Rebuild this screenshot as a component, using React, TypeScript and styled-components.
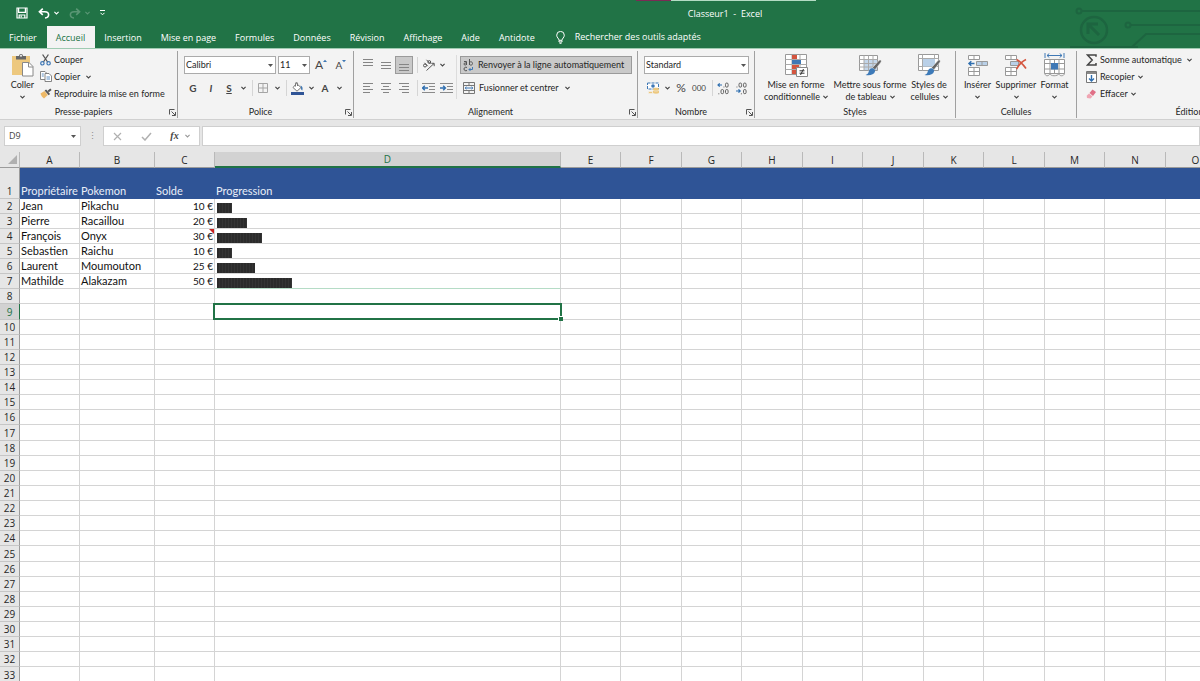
import React from "react";
import styled, { createGlobalStyle, css } from "styled-components";

const GlobalStyle = createGlobalStyle`
  *, *::before, *::after { box-sizing: border-box; }
  body {
    margin: 0;
    background: #fff;
    color: #262626;
    font: 9px/12px "Open Sans", "Noto Sans", sans-serif;
  }
  button, input, select {
    margin: 0;
    padding: 0;
    border: 0;
    border-radius: 0;
    background: none;
    color: inherit;
    font: inherit;
  }
  svg { display: block; flex: none; }
`;

const Window = styled.div`
  display: flex;
  flex-direction: column;
  height: 100vh;
  overflow: hidden;
`;

/* ---------- Title bar and tabs ---------- */

const Header = styled.header`
  position: relative;
  flex: none;
  overflow: hidden;
  background: #217346;
  color: #fff;
`;

const Circuit = styled.svg`
  position: absolute;
  top: 0;
  right: 0;
`;

const TopEdge = styled.div`
  position: absolute;
  top: 0;
  left: 53%;
  width: 180px;
  height: 1px;
  background: linear-gradient(to right, #7a2b55 35px, #b4dcc4 35px);
`;

const TitleBar = styled.div`
  position: relative;
  display: grid;
  grid-template-columns: 1fr auto 1fr;
  align-items: center;
  height: 26px;
`;

const QuickAccess = styled.div`
  display: flex;
  align-items: center;
  padding-left: 16px;
`;

const QuickButton = styled.button<{ $dim?: boolean }>`
  display: flex;
  align-items: center;
  gap: 4px;
  margin-right: 10px;
  opacity: ${(p) => (p.$dim ? 0.25 : 1)};
`;

const DocTitle = styled.h1`
  margin: 0;
  padding: 2px 0 0 250px;
  font-size: 9px;
  line-height: 12px;
  font-weight: 400;
  white-space: pre;
`;

const Tabs = styled.nav`
  position: relative;
  display: flex;
  height: 22px;
`;

const Tab = styled.button<{ $active?: boolean }>`
  padding: 2px 10px 0 9px;
  white-space: nowrap;
  ${(p) =>
    p.$active &&
    css`
      background: #f3f3f3;
      color: #217346;
    `}
`;

const TellMe = styled.button`
  display: flex;
  align-items: center;
  gap: 10px;
  margin-left: 11px;
  white-space: nowrap;
`;

/* ---------- Ribbon ---------- */

const Ribbon = styled.div`
  display: flex;
  flex: none;
  height: 72px;
  padding: 2px 0 1px;
  overflow: hidden;
  border-top: 1px solid #9fcbb2;
  border-bottom: 1px solid #d0d0d0;
  background: #f3f3f3;
  font-family: Lato, "Open Sans", sans-serif;
`;

const Group = styled.section<{ $w: number }>`
  display: flex;
  flex: none;
  flex-direction: column;
  width: ${(p) => p.$w}px;
  border-right: 1px solid #a0a0a0;
`;

const GroupBody = styled.div<{ $pad?: number }>`
  display: flex;
  flex: 1;
  padding-left: ${(p) => p.$pad ?? 5}px;
`;

const GroupFooter = styled.div`
  display: flex;
  align-items: center;
  height: 12px;
`;

const GroupTitle = styled.h2`
  flex: 1;
  margin: 0;
  font-size: 9px;
  line-height: 12px;
  font-weight: 400;
  text-align: center;
`;

const PlainButton = styled.button`
  display: flex;
  align-items: center;
  justify-content: center;
`;

const Launcher = styled(PlainButton)`
  width: 10px;
`;

const List = styled.div`
  display: flex;
  flex-direction: column;
`;

const ListButton = styled.button`
  display: flex;
  align-items: center;
  height: 17px;
  gap: 3px;
  white-space: nowrap;
`;

const ListIcon = styled.span`
  display: flex;
  justify-content: center;
  width: 11px;
`;

const Rows = styled.div`
  display: flex;
  flex-direction: column;
  gap: 5px;
  padding-top: 5px;
`;

const Row = styled.div<{ $gap?: number }>`
  display: flex;
  align-items: center;
  height: 18px;
  gap: ${(p) => p.$gap ?? 0}px;
`;

const ToolButton = styled.button<{ $on?: boolean; $bold?: boolean; $italic?: boolean; $under?: boolean; $size?: number }>`
  display: flex;
  align-items: center;
  justify-content: center;
  width: 18px;
  height: 18px;
  color: #444;
  font-size: ${(p) => p.$size ?? 10}px;
  font-weight: ${(p) => (p.$bold ? 700 : 400)};
  font-style: ${(p) => (p.$italic ? "italic" : "normal")};
  text-decoration: ${(p) => (p.$under ? "underline" : "none")};
  ${(p) =>
    p.$on &&
    css`
      border: 1px solid #9a9a9a;
      background: #c9c9c9;
    `}
`;

const ArrowButton = styled.button`
  display: flex;
  align-items: center;
  justify-content: center;
  width: 10px;
  height: 18px;
`;

const Rule = styled.span`
  width: 1px;
  height: 16px;
  margin: 0 1px 0 4px;
  background: #d5d5d5;
`;

const TallRule = styled.span`
  width: 1px;
  height: 44px;
  margin: 4px 3px 0 1px;
  background: #dcdcdc;
`;

const SelectBox = styled.label<{ $w: number }>`
  display: grid;
  align-items: center;
  width: ${(p) => p.$w}px;
  height: 18px;
  border: 1px solid #ababab;
  background: #fff;
  & > * { grid-area: 1 / 1; }
  & > select { width: 100%; height: 16px; padding-left: 1px; appearance: none; }
  & > svg { justify-self: end; margin-right: 2px; pointer-events: none; }
`;

const WideButton = styled.button<{ $on?: boolean }>`
  display: flex;
  align-items: center;
  gap: 4px;
  width: 172px;
  height: 18px;
  padding-left: 2px;
  border: 1px solid ${(p) => (p.$on ? "#9a9a9a" : "transparent")};
  background: ${(p) => (p.$on ? "#c9c9c9" : "transparent")};
  white-space: nowrap;
`;

const BigButton = styled.button<{ $w: number }>`
  display: flex;
  flex: none;
  flex-direction: column;
  align-items: center;
  width: ${(p) => p.$w}px;
  height: 54px;
  padding-top: 2px;
  white-space: nowrap;
  & > svg { margin-bottom: 2px; }
`;

const Line = styled.span`
  display: flex;
  align-items: center;
  justify-content: center;
  gap: 3px;
  height: 12px;
`;

/* ---------- Formula bar ---------- */

const FormulaBar = styled.div`
  display: flex;
  flex: none;
  align-items: center;
  height: 32px;
  padding-left: 4px;
  background: #e6e6e6;
  color: #444;
`;

const NameBox = styled.div`
  display: flex;
  align-items: center;
  width: 77px;
  height: 20px;
  padding: 0 4px;
  border: 1px solid #cfcfcf;
  background: #fff;
  & > input { flex: 1; min-width: 0; }
`;

const Dots = styled.span`
  width: 22px;
  text-align: center;
  color: #8c8c8c;
`;

const FormulaTools = styled.div`
  display: flex;
  align-items: center;
  justify-content: space-around;
  width: 97px;
  height: 20px;
  margin-right: 2px;
  border: 1px solid #cfcfcf;
  background: #fff;
`;

const FormulaInput = styled.input`
  flex: 1;
  height: 20px;
  border: 1px solid #cfcfcf;
  background: #fff;
`;

const FxButton = styled(PlainButton)`
  gap: 6px;
  font: italic 700 10px/12px "Liberation Serif", serif;
`;

/* ---------- Sheet ---------- */

const SheetArea = styled.main`
  flex: 1;
  min-height: 0;
  overflow: hidden;
`;

const Sheet = styled.table`
  width: 1226px;
  min-width: 100%;
  table-layout: fixed;
  border-collapse: separate;
  border-spacing: 0;
  font-family: Lato, "Open Sans", sans-serif;
  font-size: 11px;
  line-height: 14px;
`;

const Col = styled.col<{ $w: number }>`
  width: ${(p) => p.$w}px;
`;

const ColHead = styled.th<{ $on?: boolean }>`
  height: 16px;
  padding: 0;
  border-right: 1px solid #b9b9b9;
  border-bottom: ${(p) => (p.$on ? "2px solid #217346" : "1px solid #9b9b9b")};
  background: ${(p) => (p.$on ? "#d2d2d2" : "#e6e6e6")};
  color: ${(p) => (p.$on ? "#217346" : "#262626")};
  font: 400 10px/12px "Open Sans", sans-serif;
`;

const Corner = styled(ColHead)`
  & > svg { margin-left: 8px; }
`;

const RowHead = styled.th<{ $on?: boolean }>`
  padding: 0;
  border-right: 1px solid ${(p) => (p.$on ? "#217346" : "#9b9b9b")};
  border-bottom: 1px solid #c6c6c6;
  background: ${(p) => (p.$on ? "#d2d2d2" : "#e6e6e6")};
  color: ${(p) => (p.$on ? "#217346" : "#262626")};
  font: 400 10px/14px "Open Sans", sans-serif;
  text-align: center;
  vertical-align: bottom;
`;

const Cell = styled.td<{ $amount?: boolean; $trace?: boolean }>`
  position: relative;
  padding: 0 1px;
  border-right: 1px solid #d4d4d4;
  border-bottom: 1px solid ${(p) => (p.$trace ? "#b5dcc6" : "#d4d4d4")};
  color: #111;
  text-align: ${(p) => (p.$amount ? "right" : "left")};
  font-size: ${(p) => (p.$amount ? 10 : 11)}px;
  vertical-align: bottom;
  white-space: nowrap;
`;

const SheetRow = styled.tr`
  height: 15px;
  &:nth-child(8n + 1) { height: 16px; }
  &:first-child { height: 31px; }
  &:first-child > td {
    border-color: #2f5496;
    background: #2f5496;
    color: #e9eef8;
  }
`;

const Bar = styled.div`
  height: 10px;
  margin-left: 1px;
  background: repeating-linear-gradient(to right, #2b2b2b 0 2px, #343434 2px 3px);
`;

const Selection = styled.div`
  position: absolute;
  z-index: 1;
  inset: -1px -2px -1px -2px;
  border: 2px solid #217346;
  &::after {
    content: "";
    position: absolute;
    right: -3px;
    bottom: -3px;
    width: 5px;
    height: 5px;
    border: 1px solid #fff;
    border-width: 1px 0 0 1px;
    background: #217346;
  }
`;

const NoteMark = styled.span`
  position: absolute;
  top: 0;
  right: 0;
  border-top: 5px solid #c8201e;
  border-left: 5px solid transparent;
`;

/* ---------- Icons ---------- */

const Chevron = ({ color = "#444" }: { color?: string }) => (
  <svg width="5" height="4" viewBox="0 0 5 4" fill="none" stroke={color} strokeWidth="1.1">
    <path d="M.4 .8 2.5 2.9 4.6 .8" />
  </svg>
);
const Triangle = () => (
  <svg width="5" height="3" viewBox="0 0 5 3" fill="#555"><path d="M0 0h5L2.5 3z" /></svg>
);
const SaveIcon = () => (
  <svg width="12" height="12" viewBox="0 0 12 12" fill="none" stroke="#fff" strokeWidth="1.2">
    <path d="M1 1h10v10H1zM2.600 1v4.300h6.800V1M3.200 11V8h5.600v3" />
    <path d="M5.200 8.400v2.200" />
  </svg>
);
const UndoIcon = ({ flip }: { flip?: boolean }) => (
  <svg width="12" height="11" viewBox="0 0 12 11" fill="none" stroke="#fff" strokeWidth="1.6">
    <g transform={flip ? "matrix(-1 0 0 1 12 0)" : undefined}>
      <path d="M4.8 .6 1.4 3.8l3.4 3.1M1.6 3.8h5.2c2.4 0 3.8 1.1 3.8 3 0 1.8-1.3 3-3.6 3.2" />
    </g>
  </svg>
);
const CustomizeIcon = () => (
  <svg width="5" height="6" viewBox="0 0 5 6" fill="none" stroke="#fff"><path d="M0 .5h5M.5 2.800 2.500 4.800l2-2" /></svg>
);
const BulbIcon = () => (
  <svg width="9" height="13" viewBox="0 0 9 13" fill="none" stroke="#fff" strokeWidth="1">
    <path d="M3 9.3C3 7.6.7 6.6.7 4.2a3.8 3.8 0 0 1 7.6 0C8.300 6.600 6 7.600 6 9.300zM3 9.500v1.500h3V9.500M3.500 12.300h2" />
  </svg>
);
const LauncherIcon = () => (
  <svg width="7" height="7" viewBox="0 0 7 7" fill="none" stroke="#555" strokeWidth="1">
    <path d="M.5 5.500V.500h5M2.500 2.500l3.500 3.500M6.500 3v3.500H3" />
  </svg>
);
const PasteIcon = () => (
  <svg width="24" height="24" viewBox="0 0 24 24">
    <path d="M1 3h18v19H1z" fill="#edc87e" />
    <path d="M5 3h3a2 2 0 0 1 4 0h3v3.500H5z" fill="#666" />
    <circle cx="10" cy="2.800" r="1" fill="#f3f3f3" />
    <path d="M11.500 9.500h6.500l4 4v9.500H11.500z" fill="#fff" stroke="#888" />
    <path d="M17.500 9.500V14H22" fill="none" stroke="#888" />
  </svg>
);
const CutIcon = () => (
  <svg width="11" height="12" viewBox="0 0 11 12" fill="none">
    <path d="M2.600 .500 7.600 8M8.400 .500 3.400 8" stroke="#555" strokeWidth="1.300" />
    <circle cx="2.400" cy="9.300" r="1.700" stroke="#3f78b5" strokeWidth="1.200" />
    <circle cx="8.600" cy="9.300" r="1.700" stroke="#3f78b5" strokeWidth="1.200" />
  </svg>
);
const CopyIcon = () => (
  <svg width="12" height="11" viewBox="0 0 12 11" fill="#fff" stroke="#777" strokeWidth=".9">
    <path d="M.5.5h4.500L6.500 2v6.500h-6z" />
    <path d="M5 2.500h4l2.500 2.500v5.500H5z" />
    <path d="M1.800 3h2M1.800 5h2M6.500 6h3.500M6.500 8h3.500" stroke="#4c83bd" />
  </svg>
);
const BrushIcon = () => (
  <svg width="12" height="11" viewBox="0 0 12 11">
    <path d="M.5 5.500 4.500 3l3.300 4L4 10.500C2.500 9.500 1 7.500.5 5.500z" fill="#edb968" />
    <path d="m4.600 2.600 1.500-1.200 4 4.600-1.500 1.300z" fill="#555" />
    <path d="m7.500 2.700 2.800-2.200 1.300 1.500-2.800 2.300z" fill="#555" />
  </svg>
);
const GridIcon = () => (
  <svg width="12" height="12" viewBox="0 0 12 12" fill="none" stroke="#a5a5a5">
    <path d="M1.500 1.500h9v9h-9zM6 1.500v9M1.500 6h9" />
  </svg>
);
const BucketIcon = () => (
  <svg width="13" height="13" viewBox="0 0 13 13">
    <path d="m5.500 1.500 4.500 4-4 3.700L2 5.500z" fill="#fff" stroke="#777" />
    <path d="M4.500 4.500V1.200c0-1 2-1 2 0V4" fill="none" stroke="#777" />
    <path d="M9.500 3.500c2 .5 2.500 2.500 1.800 5-1-.5-1.500-1.500-1.300-3z" fill="#3f78b5" />
    <path d="M0 10h13v3H0z" fill="#2f5496" />
  </svg>
);
const SizeMark = ({ up }: { up?: boolean }) => (
  <svg width="4" height="12" viewBox="0 0 4 12" fill="#3f78b5">
    <path d={up ? "M0 3h4L2 .8z" : "M0 1h4L2 3.200z"} />
  </svg>
);
const LinesIcon = ({ rows, color = "#858585" }: { rows: [number, number, number][]; color?: string }) => (
  <svg width="12" height="12" viewBox="0 0 12 12" fill="none" stroke={color}>
    {rows.map(([x1, x2, y]) => <path key={y} d={`M${x1} ${y}.5H${x2}`} />)}
  </svg>
);
const OrientIcon = () => (
  <svg width="13" height="12" viewBox="0 0 13 12" fill="none" stroke="#555" strokeWidth="1">
    <path d="M4.500 11.500 12 4.500M9.300 4.300h2.900v2.900" />
    <circle cx="3" cy="6.500" r="1.500" />
    <path d="m2.500 3.800 3.300 3.400M4.500 .8l4 4.200" />
    <circle cx="7.300" cy="3" r="1.400" />
  </svg>
);
const IndentIcon = ({ right }: { right?: boolean }) => (
  <svg width="13" height="11" viewBox="0 0 13 11" fill="none" stroke="#8a8a8a">
    <path d="M0 .5h13M7 3.500h6M7 6.500h6M0 9.500h13" />
    <path d={right ? "M0 5h5M3.200 2.800 5.400 5 3.200 7.200" : "M1 5h5M2.800 2.800.6 5l2.200 2.200"} stroke="#2f6fb0" strokeWidth="1.400" />
  </svg>
);
const WrapIcon = () => (
  <svg width="11" height="13" viewBox="0 0 11 13" fill="none" stroke="#555" strokeWidth="1">
    <path d="M1 2.500h2.500v3.500M3.500 4H2C.6 4 .6 6 2 6c.8 0 1.500-.3 1.500-1M6.500 0v6M6.500 3.500c1-1.300 3-.8 3 1s-2 2-3 1M4 8.500c-1.500-.8-3 0-3 1.500s1.500 2.200 3 1.500" />
    <path d="M9.500 8v2.500H6M7.500 9 6 10.500 7.500 12" stroke="#3f78b5" />
  </svg>
);
const MergeIcon = () => (
  <svg width="12" height="12" viewBox="0 0 12 12" fill="none" stroke="#777">
    <path d="M.5.5h11v11H.5zM.5 3.500h11M.5 8.500h11M6 .5v3M6 8.500v3" />
    <path d="M2 6h8M3.500 4.800 2.200 6l1.300 1.200M8.500 4.800 9.800 6 8.500 7.200" stroke="#3f78b5" />
  </svg>
);
const MoneyIcon = () => (
  <svg width="13" height="12" viewBox="0 0 13 12">
    <path d="M.5 1h11v6H.5z" fill="#fff" stroke="#3f78b5" strokeDasharray="3 1" />
    <circle cx="6" cy="4" r="1.800" fill="#3f78b5" />
    <path d="M6 7c0-1.600 6-1.600 6 0v3.500c0 1.600-6 1.600-6 0z" fill="#edc87e" />
    <path d="M6 8.300c1.500 1 4.500 1 6 0M1.500 9.500h4v2h-4z" fill="#edc87e" stroke="#f3f3f3" strokeWidth=".6" />
  </svg>
);
const DecimalIcon = ({ less }: { less?: boolean }) => (
  <svg width="13" height="13" viewBox="0 0 13 13" fill="none" stroke="#555" strokeWidth=".9">
    {less ? (
      <>
        <path d="M1.500 5h.9" />
        <rect x="4" y="1" width="2.600" height="4.200" rx="1.300" />
        <rect x="8.500" y="1" width="2.600" height="4.200" rx="1.300" />
        <rect x="8.500" y="7.500" width="2.600" height="4.200" rx="1.300" />
        <path d="M6.400 11.300v1" />
        <path d="M1 9h4M3.500 7.300 5.200 9 3.500 10.700" stroke="#2f6fb0" strokeWidth="1.200" />
      </>
    ) : (
      <>
        <rect x="8.500" y="1" width="2.600" height="4.200" rx="1.300" />
        <path d="M6.500 5h.9M1.800 11.300v1" />
        <rect x="4" y="7.500" width="2.600" height="4.200" rx="1.300" />
        <rect x="8.500" y="7.500" width="2.600" height="4.200" rx="1.300" />
        <path d="M5 3H1M2.700 1.300 1 3l1.700 1.700" stroke="#2f6fb0" strokeWidth="1.200" />
      </>
    )}
  </svg>
);
const CondIcon = () => (
  <svg width="24" height="24" viewBox="0 0 24 24">
    <path d="M1.500 1.500h21v20h-21z" fill="#fff" stroke="#999" />
    <path d="M1.500 6.500h21M1.500 11.500h21M1.500 16.500h21M8 1.500v20M16 1.500v20" stroke="#aaa" fill="none" />
    <path d="M8 2h5v4H8zM8 12h7v4H8zM8 17h4v4H8z" fill="#d4553f" />
    <path d="M8 7h9v4H8z" fill="#3f78b5" />
    <path d="M12.500 14.500h11v9h-11z" fill="#fff" stroke="#888" />
    <path d="M15.500 17.800h5M15.500 20.200h5M19.500 16l-3 6" stroke="#333" fill="none" />
  </svg>
);
const StyleBrush = () => (
  <>
    <path d="M22.800 7.200c.8.700.5 1.500-.2 2.500l-5.600 7-2.500-2 6-6.700c.8-.9 1.500-1.400 2.300-.8z" fill="#666" stroke="#f3f3f3" strokeWidth=".5" />
    <path d="M14 15.200c1.700-.3 3.500 1.300 3 3.300-.8 3.300-5.500 4.500-9.500 3.500 2.500-.8 2.800-2 3.300-3.800.4-1.600 1.500-2.800 3.200-3z" fill="#3d7ab8" />
  </>
);
const TableStyleIcon = () => (
  <svg width="24" height="24" viewBox="0 0 24 24">
    <path d="M1.500 2.500h18v15h-18z" fill="#fff" stroke="#999" />
    <path d="M6 7h13v10H6z" fill="#c3d6ea" />
    <path d="M1.500 6.500h18M1.500 10.500h18M1.500 14h18M6 2.500v15M10.500 2.500v15M15 2.500v15" stroke="#aaa" fill="none" />
    <StyleBrush />
  </svg>
);
const CellStyleIcon = () => (
  <svg width="24" height="24" viewBox="0 0 24 24">
    <path d="M1.500 1.500h20v16h-20z" fill="#fff" stroke="#999" />
    <path d="M5.500 1.500v16M1.500 5.500h20M17.500 1.500v4M1.500 13.500h20" stroke="#aaa" fill="none" />
    <path d="M6 6h12v7.500H6z" fill="#b9d0e8" />
    <StyleBrush />
  </svg>
);
const InsertIcon = () => (
  <svg width="22" height="24" viewBox="0 0 22 24" fill="#fff" stroke="#999">
    <path d="M1.500 2.500h11v4h-11zM7 2.500v4M1.500 14.500h11v8h-11zM1.500 18.500h11M7 14.500v8" />
    <path d="M9.500 8.500h11v4h-11zM15 8.500v4" fill="#b9d0e8" />
    <path d="M7.500 10.500H2M4.300 8.300 2 10.500l2.300 2.200" fill="none" stroke="#2f6fb0" strokeWidth="1.500" />
  </svg>
);
const DeleteIcon = () => (
  <svg width="24" height="24" viewBox="0 0 24 24" fill="#fff" stroke="#999">
    <path d="M1.500 2.500h11v4h-11zM7 2.500v4M1.500 14.500h11v8h-11zM1.500 18.500h11M7 14.500v8" />
    <path d="M6.500 8.500h8v4h-8z" fill="#b9d0e8" />
    <path d="M12.500 6.500c4 2 7 5.500 9.500 9M22 6.500c-4 2-7 5-9.500 9.500" fill="none" stroke="#d4553f" strokeWidth="1.700" />
  </svg>
);
const FormatIcon = () => (
  <svg width="24" height="24" viewBox="0 0 24 24" fill="none" stroke="#999">
    <path d="M1.500 6.500h20v14h-20z" fill="#fff" />
    <path d="M7 6.500v14M16 6.500v14M1.500 10.500h20M1.500 16h20M11.500 6.500v14M2 20.500c0 3 4 3 5 0 0 3 8 3 9 0 0 3 5 3 5.500 0" />
    <path d="M8 10h7v6.500H8z" fill="#3f78b5" stroke="none" />
    <path d="M4 2.500h15M6.300.5 4 2.500l2.300 2M16.700.5l2.300 2-2.300 2M2 0v5M21 0v5" stroke="#3f78b5" />
  </svg>
);
const SumIcon = () => (
  <svg width="11" height="12" viewBox="0 0 11 12" fill="none" stroke="#444" strokeWidth="1.500">
    <path d="M10 2.800V1H1.500l4.700 5-4.700 5H10V9" />
  </svg>
);
const FillIcon = () => (
  <svg width="11" height="12" viewBox="0 0 11 12" fill="none" stroke="#777">
    <path d="M.5.5h10v11H.5z" fill="#fff" />
    <path d="M1 1h9v2H1z" fill="#888" stroke="none" />
    <path d="M5.500 4v6M3 7.500 5.500 10 8 7.500" stroke="#2f6fb0" strokeWidth="1.400" />
  </svg>
);
const EraserIcon = () => (
  <svg width="11" height="10" viewBox="0 0 11 10">
    <path d="M6.500.5 10 3 7 7 3.500 4z" fill="#e06f86" />
    <path d="M3 4.500 6.400 7.400 4.500 9.500 1 9 .7 6.800z" fill="#f0a5b3" />
  </svg>
);

/* ---------- Data ---------- */

const tabs = ["Fichier", "Accueil", "Insertion", "Mise en page", "Formules", "Données", "Révision", "Affichage", "Aide", "Antidote"];
const columns = "ABCDEFGHIJKLMNO".split("");
const colWidth = (i: number) => [60, 75, 60, 346][i] ?? (i % 2 ? 61 : 60);
const records: [string, string, number][] = [
  ["Jean", "Pikachu", 10],
  ["Pierre", "Racaillou", 20],
  ["François", "Onyx", 30],
  ["Sebastien", "Raichu", 10],
  ["Laurent", "Moumouton", 25],
  ["Mathilde", "Alakazam", 50],
];
const headings = ["Propriétaire", "Pokemon", "Solde", "Progression"];
const rowNumbers = Array.from({ length: 33 }, (_, i) => i + 1);

function renderCell(row: number, col: number) {
  if (row === 1) return <Cell key={col}>{headings[col]}</Cell>;
  const record = records[row - 2];
  if (record && col < 2) return <Cell key={col}>{record[col]}</Cell>;
  if (record && col === 2)
    return (
      <Cell key={col} $amount>
        {record[2]} €{row === 4 && <NoteMark />}
      </Cell>
    );
  if (record && col === 3)
    return (
      <Cell key={col} $trace={row === 7}>
        <Bar role="img" aria-label={`${record[2]}`} style={{ width: Math.round(record[2] * 1.5) }} />
      </Cell>
    );
  return <Cell key={col}>{row === 9 && col === 3 && <Selection />}</Cell>;
}

const Footer = ({ title, launcher }: { title: string; launcher?: boolean }) => (
  <GroupFooter>
    <GroupTitle>{title}</GroupTitle>
    {launcher && <Launcher aria-label={`Options ${title}`}><LauncherIcon /></Launcher>}
  </GroupFooter>
);

const More = ({ label }: { label: string }) => (
  <ArrowButton aria-label={label}><Chevron /></ArrowButton>
);

export default function App() {
  return (
    <Window>
      <GlobalStyle />
      <Header>
        <Circuit width="130" height="48" viewBox="0 0 130 48" fill="none" stroke="#1d6540" strokeWidth="2">
          <circle cx="9" cy="11" r="2.500" />
          <path d="M12 11h118M61 25h69M0 47h68M62 47l14-13h54" />
          <circle cx="58" cy="25" r="2.500" />
          <circle cx="24" cy="30" r="13" strokeWidth="2.500" />
          <path d="M29 35 18 24M18 34V24h10" strokeWidth="3" />
        </Circuit>
        <TopEdge />
        <TitleBar>
          <QuickAccess>
            <QuickButton aria-label="Enregistrer"><SaveIcon /></QuickButton>
            <QuickButton aria-label="Annuler"><UndoIcon /><Chevron color="#fff" /></QuickButton>
            <QuickButton aria-label="Rétablir" $dim><UndoIcon flip /><Chevron color="#fff" /></QuickButton>
            <QuickButton aria-label="Personnaliser"><CustomizeIcon /></QuickButton>
          </QuickAccess>
          <DocTitle>{"Classeur1  -  Excel"}</DocTitle>
        </TitleBar>
        <Tabs>
          {tabs.map((t) => <Tab key={t} $active={t === "Accueil"}>{t}</Tab>)}
          <TellMe><BulbIcon />Rechercher des outils adaptés</TellMe>
        </Tabs>
      </Header>

      <Ribbon>
        <Group $w={178}>
          <GroupBody>
            <BigButton $w={35}>
              <PasteIcon />
              <Line>Coller</Line>
              <Line><Chevron /></Line>
            </BigButton>
            <List>
              <ListButton><ListIcon><CutIcon /></ListIcon>Couper</ListButton>
              <ListButton><ListIcon><CopyIcon /></ListIcon>Copier<More label="Options de copie" /></ListButton>
              <ListButton><ListIcon><BrushIcon /></ListIcon>Reproduire la mise en forme</ListButton>
            </List>
          </GroupBody>
          <Footer title="Presse-papiers" launcher />
        </Group>

        <Group $w={176}>
          <GroupBody $pad={6}>
            <Rows>
              <Row $gap={2}>
                <SelectBox $w={92}>
                  <select aria-label="Police"><option>Calibri</option></select>
                  <Triangle />
                </SelectBox>
                <SelectBox $w={32}>
                  <select aria-label="Taille"><option>11</option></select>
                  <Triangle />
                </SelectBox>
                <ToolButton aria-label="Agrandir la police" $size={12}>A<SizeMark up /></ToolButton>
                <ToolButton aria-label="Réduire la police">A<SizeMark /></ToolButton>
              </Row>
              <Row>
                <ToolButton $bold>G</ToolButton>
                <ToolButton $italic $bold>I</ToolButton>
                <ToolButton $under $bold>S</ToolButton>
                <More label="Soulignement" />
                <Rule />
                <ToolButton aria-label="Bordures"><GridIcon /></ToolButton>
                <More label="Options de bordure" />
                <Rule />
                <ToolButton aria-label="Remplissage"><BucketIcon /></ToolButton>
                <More label="Couleurs de remplissage" />
                <ToolButton $bold>A</ToolButton>
                <More label="Couleurs de police" />
              </Row>
            </Rows>
          </GroupBody>
          <Footer title="Police" launcher />
        </Group>

        <Group $w={284}>
          <GroupBody $pad={5}>
            <Rows>
              <Row>
                <ToolButton aria-label="Aligner en haut"><LinesIcon rows={[[1, 11, 0], [1, 11, 3], [1, 11, 6]]} /></ToolButton>
                <ToolButton aria-label="Aligner au centre"><LinesIcon rows={[[1, 11, 3], [1, 11, 6], [1, 11, 9]]} /></ToolButton>
                <ToolButton aria-label="Aligner en bas" $on><LinesIcon rows={[[1, 11, 5], [1, 11, 8], [1, 11, 11]]} /></ToolButton>
                <Rule />
                <ToolButton aria-label="Orientation"><OrientIcon /></ToolButton>
                <More label="Options d'orientation" />
              </Row>
              <Row>
                <ToolButton aria-label="Aligner à gauche"><LinesIcon rows={[[1, 11, 1], [1, 8, 4], [1, 11, 7], [1, 8, 10]]} /></ToolButton>
                <ToolButton aria-label="Centrer"><LinesIcon rows={[[1, 11, 1], [3, 9, 4], [1, 11, 7], [3, 9, 10]]} /></ToolButton>
                <ToolButton aria-label="Aligner à droite"><LinesIcon rows={[[1, 11, 1], [4, 11, 4], [1, 11, 7], [4, 11, 10]]} /></ToolButton>
                <Rule />
                <ToolButton aria-label="Diminuer le retrait"><IndentIcon /></ToolButton>
                <ToolButton aria-label="Augmenter le retrait"><IndentIcon right /></ToolButton>
              </Row>
            </Rows>
            <TallRule />
            <Rows>
              <WideButton $on><WrapIcon />Renvoyer à la ligne automatiquement</WideButton>
              <WideButton><MergeIcon />Fusionner et centrer<More label="Options de fusion" /></WideButton>
            </Rows>
          </GroupBody>
          <Footer title="Alignement" launcher />
        </Group>

        <Group $w={117}>
          <GroupBody $pad={6}>
            <Rows>
              <Row>
                <SelectBox $w={105}>
                  <select aria-label="Format de nombre"><option>Standard</option></select>
                  <Triangle />
                </SelectBox>
              </Row>
              <Row>
                <ToolButton aria-label="Format comptabilité"><MoneyIcon /></ToolButton>
                <More label="Devises" />
                <ToolButton $size={12}>%</ToolButton>
                <ToolButton $size={8}>000</ToolButton>
                <Rule />
                <ToolButton aria-label="Ajouter une décimale"><DecimalIcon /></ToolButton>
                <ToolButton aria-label="Réduire les décimales"><DecimalIcon less /></ToolButton>
              </Row>
            </Rows>
          </GroupBody>
          <Footer title="Nombre" launcher />
        </Group>

        <Group $w={201}>
          <GroupBody>
            <BigButton $w={72}>
              <CondIcon />
              <Line>Mise en forme</Line>
              <Line>conditionnelle<Chevron /></Line>
            </BigButton>
            <BigButton $w={76}>
              <TableStyleIcon />
              <Line>Mettre sous forme</Line>
              <Line>de tableau<Chevron /></Line>
            </BigButton>
            <BigButton $w={42}>
              <CellStyleIcon />
              <Line>Styles de</Line>
              <Line>cellules<Chevron /></Line>
            </BigButton>
          </GroupBody>
          <Footer title="Styles" />
        </Group>

        <Group $w={121}>
          <GroupBody>
            <BigButton $w={33}>
              <InsertIcon />
              <Line>Insérer</Line>
              <Line><Chevron /></Line>
            </BigButton>
            <BigButton $w={44}>
              <DeleteIcon />
              <Line>Supprimer</Line>
              <Line><Chevron /></Line>
            </BigButton>
            <BigButton $w={33}>
              <FormatIcon />
              <Line>Format</Line>
              <Line><Chevron /></Line>
            </BigButton>
          </GroupBody>
          <Footer title="Cellules" />
        </Group>

        <Group $w={226}>
          <GroupBody $pad={9}>
            <List>
              <ListButton><ListIcon><SumIcon /></ListIcon>Somme automatique<More label="Fonctions" /></ListButton>
              <ListButton><ListIcon><FillIcon /></ListIcon>Recopier<Chevron /></ListButton>
              <ListButton><ListIcon><EraserIcon /></ListIcon>Effacer<Chevron /></ListButton>
            </List>
          </GroupBody>
          <Footer title="Édition" />
        </Group>
      </Ribbon>

      <FormulaBar>
        <NameBox>
          <input aria-label="Zone Nom" defaultValue="D9" />
          <PlainButton aria-label="Liste des noms"><Triangle /></PlainButton>
        </NameBox>
        <Dots>⋮</Dots>
        <FormulaTools>
          <PlainButton aria-label="Annuler la saisie">
            <svg width="9" height="9" viewBox="0 0 9 9" fill="none" stroke="#b0b0b0" strokeWidth="1.200"><path d="m1 1 7 7M8 1 1 8" /></svg>
          </PlainButton>
          <PlainButton aria-label="Valider">
            <svg width="11" height="9" viewBox="0 0 11 9" fill="none" stroke="#b0b0b0" strokeWidth="1.500"><path d="m1 5 3 3 6-7" /></svg>
          </PlainButton>
          <FxButton aria-label="Insérer une fonction">fx<Chevron color="#999" /></FxButton>
        </FormulaTools>
        <FormulaInput aria-label="Barre de formule" />
      </FormulaBar>

      <SheetArea>
        <Sheet>
          <colgroup>
            <Col $w={20} />
            {columns.map((c, i) => <Col key={c} $w={colWidth(i)} />)}
          </colgroup>
          <thead>
            <tr>
              <Corner aria-label="Tout sélectionner">
                <svg width="9" height="9" viewBox="0 0 9 9" fill="#b0b0b0"><path d="M9 0v9H0z" /></svg>
              </Corner>
              {columns.map((c) => <ColHead key={c} scope="col" $on={c === "D"}>{c}</ColHead>)}
            </tr>
          </thead>
          <tbody>
            {rowNumbers.map((n) => (
              <SheetRow key={n}>
                <RowHead scope="row" $on={n === 9}>{n}</RowHead>
                {columns.map((_, i) => renderCell(n, i))}
              </SheetRow>
            ))}
          </tbody>
        </Sheet>
      </SheetArea>
    </Window>
  );
}
